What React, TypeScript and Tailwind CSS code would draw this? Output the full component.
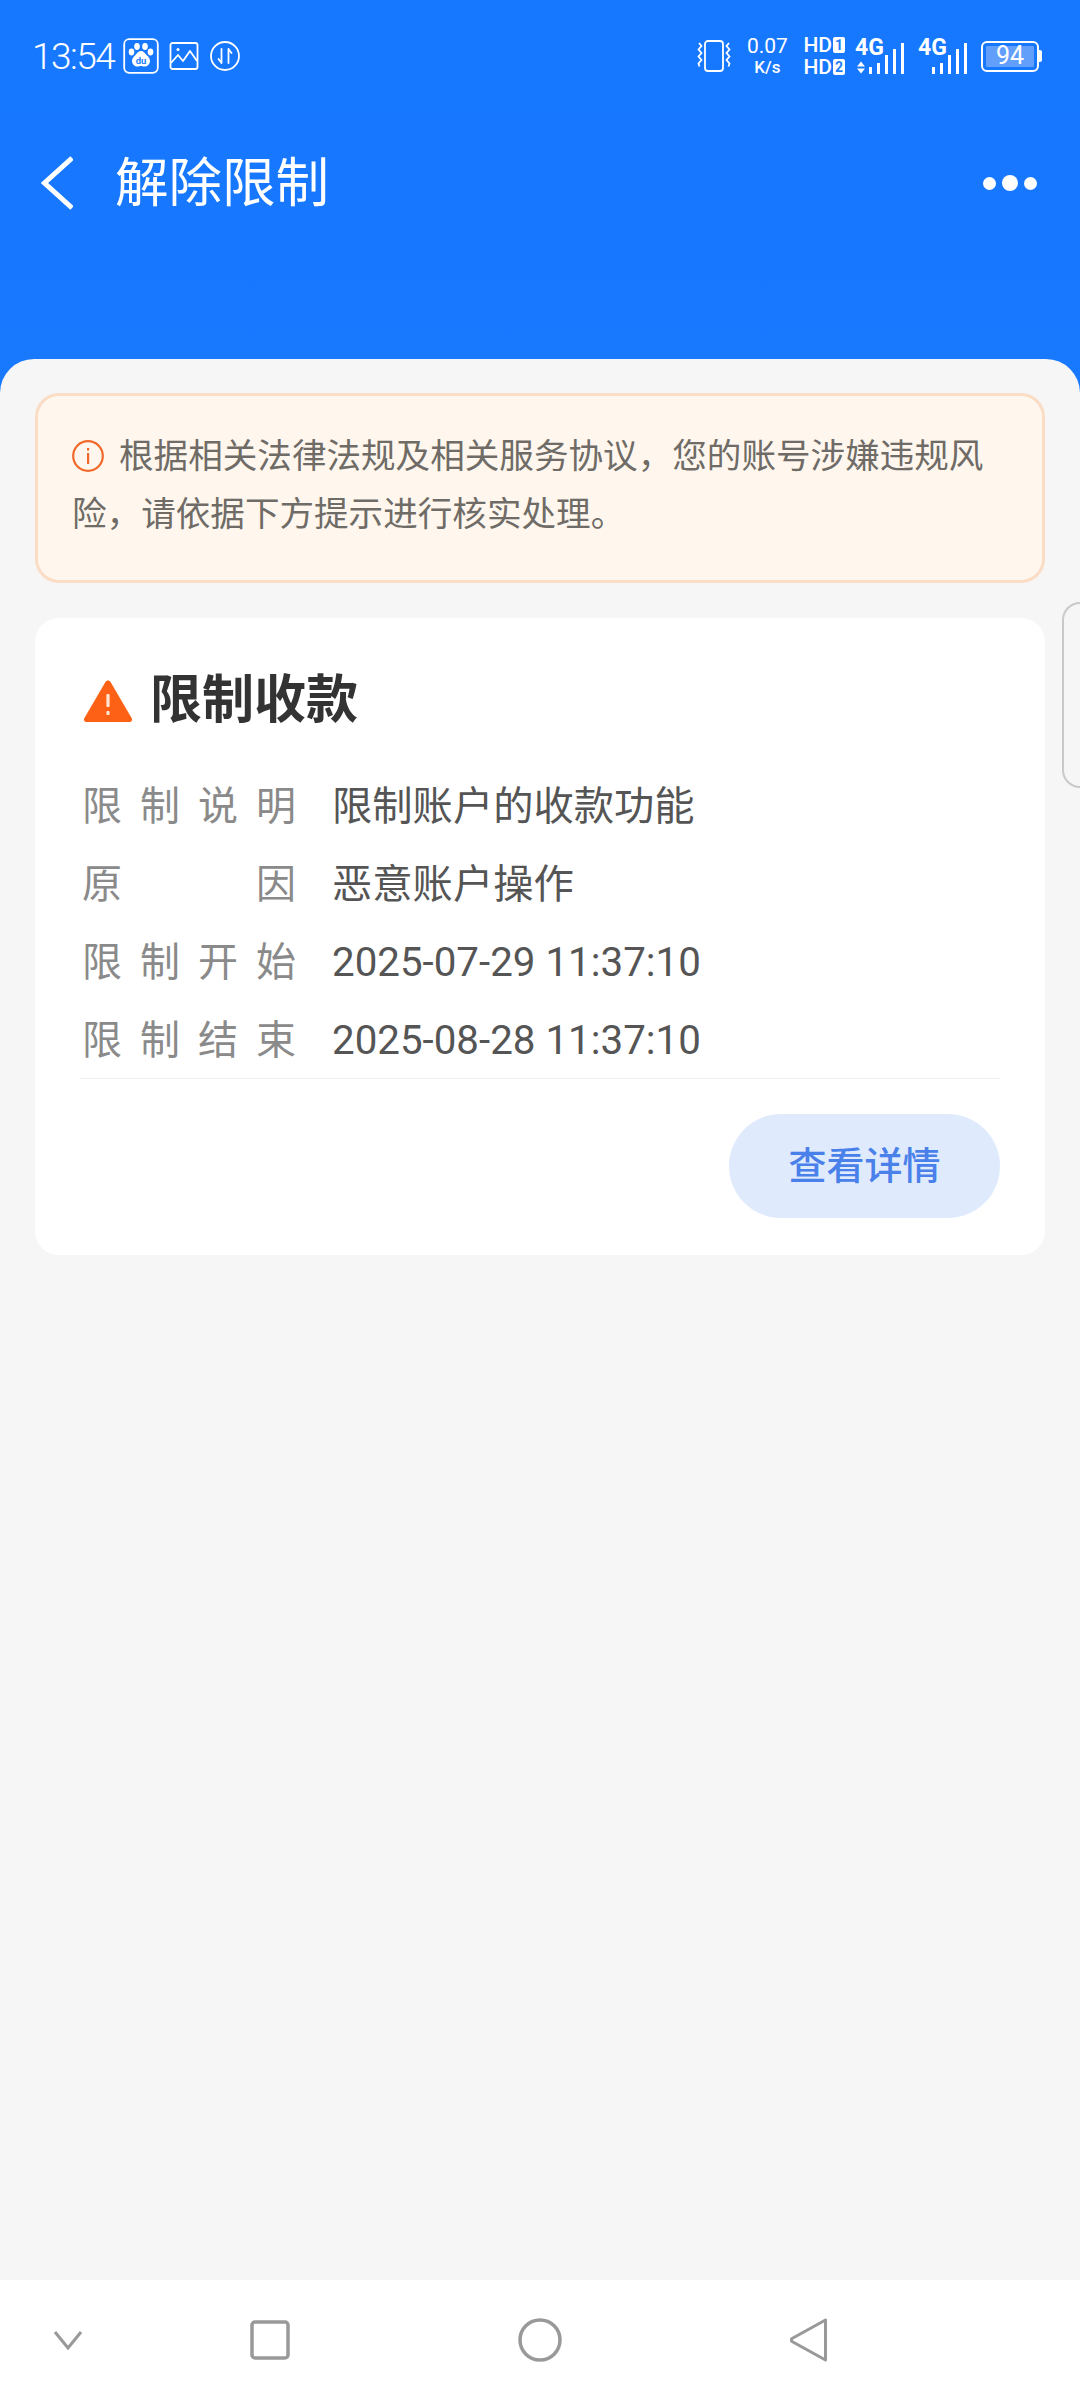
// ============ Status bar icons ============

function BaiduIcon() {
  return (
    <svg width="36" height="36" viewBox="0 0 36 36" fill="none">
      <rect x="1.2" y="1.2" width="33.6" height="33.6" rx="5" stroke="white" strokeWidth="1.8" />
      <ellipse cx="8.5" cy="14" rx="2.8" ry="3.4" fill="white" />
      <ellipse cx="14" cy="8.5" rx="2.8" ry="3.4" fill="white" />
      <ellipse cx="22" cy="8.5" rx="2.8" ry="3.4" fill="white" />
      <ellipse cx="27.5" cy="14" rx="2.8" ry="3.4" fill="white" />
      <path d="M18 13c3 0 4 2.500 6 4.500 2 1.800 3 3.500 3 5.500 0 3.500-3 5.500-5.500 5.500-1.500 0-2.500-.5-3.500-.5s-2 .5-3.500.5C12 28.500 9 26.500 9 23c0-2 1-3.700 3-5.500 2-2 3-4.500 6-4.500z" fill="white" />
      <text x="18" y="26" textAnchor="middle" fontSize="9.500" fontWeight="700" fill="#1f7ffb" fontFamily="Roboto, sans-serif">du</text>
    </svg>
  )
}

function PictureIcon() {
  return (
    <svg width="30" height="30" viewBox="0 0 30 30" fill="none" stroke="white" strokeWidth="1.800">
      <rect x="1.500" y="2" width="27" height="26" rx="2" />
      <path d="M2 22l7-8 5 6 7-10 7 10" strokeLinejoin="round" />
      <circle cx="9" cy="8.500" r="1.500" fill="white" stroke="none" />
    </svg>
  )
}

function DataIcon() {
  return (
    <svg width="32" height="32" viewBox="0 0 32 32" fill="none" stroke="white" strokeWidth="1.800">
      <circle cx="16" cy="16" r="14" />
      <path d="M12.500 9v14M12.500 23l-3-4" strokeLinecap="round" />
      <path d="M19.500 23V9M19.500 9l3 4" strokeLinecap="round" />
    </svg>
  )
}

function VibrateIcon() {
  return (
    <svg width="36" height="34" viewBox="0 0 36 34" fill="none" stroke="white" strokeWidth="1.800">
      <rect x="9" y="2" width="18" height="30" rx="3" />
      <path d="M3 4l2.500 3-3 3.500 3 3.500-3 3.500 3 3.500-3 3.500 1 3" />
      <path d="M33 4l-2.500 3 3 3.500-3 3.500 3 3.500-3 3.500 3 3.500-1 3" />
    </svg>
  )
}

function SignalIcon({ arrows }: { arrows?: boolean }) {
  return (
    <svg width="51" height="36" viewBox="0 0 51 36" fill="white">
      {arrows && <path d="M2 28.500l4-5 4 5zM2 30.500l4 5 4-5z" />}
      <rect x="14" y="29" width="3" height="7" />
      <rect x="22" y="25" width="3" height="11" />
      <rect x="30" y="17" width="3" height="19" />
      <rect x="38" y="11" width="3" height="25" />
      <rect x="46" y="5" width="3" height="31" />
    </svg>
  )
}

function HdLine({ n }: { n: string }) {
  return (
    <div className="flex items-center h-[16px] text-[21px] font-medium leading-none text-white">
      <span>HD</span>
      <span className="flex items-center justify-center w-[12px] h-[16px] ml-[1px] rounded-[2px] bg-white text-[#1f7ffb] text-[14px] font-bold">
        {n}
      </span>
    </div>
  )
}

function Battery() {
  return (
    <div className="flex items-center">
      <div className="flex items-center w-[58px] h-[31px] p-[3px] rounded-[6px] border-2 border-white">
        <div className="flex items-center justify-center w-full h-full bg-[#629ffb] rounded-[1px] text-[25px] text-white">94</div>
      </div>
      <div className="w-[3px] h-[12px] bg-white rounded-r-[2px]" />
    </div>
  )
}

function StatusBar() {
  return (
    <div className="flex items-center justify-between h-[36px] mt-[38px] pl-[32px] pr-[38px] text-white">
      <div className="flex items-center">
        <span className="text-[37px] font-light tracking-[-1.500px] leading-none w-[91px]">13:54</span>
        <BaiduIcon />
        <span className="ml-[10px]"><PictureIcon /></span>
        <span className="ml-[10px]"><DataIcon /></span>
      </div>
      <div className="flex items-center">
        <VibrateIcon />
        <div className="flex flex-col items-center ml-[14px] w-[42px] leading-none">
          <span className="text-[21px]">0.07</span>
          <span className="text-[17px] font-medium mt-[2px]">K/s</span>
        </div>
        <div className="flex flex-col ml-[15px] gap-[6px]">
          <HdLine n="1" />
          <HdLine n="2" />
        </div>
        <div className="relative ml-[10px]">
          <SignalIcon arrows />
          <span className="absolute left-0 top-[-2px] text-[23px] font-bold leading-none">4G</span>
        </div>
        <div className="relative ml-[12px]">
          <SignalIcon />
          <span className="absolute left-0 top-[-2px] text-[23px] font-bold leading-none">4G</span>
        </div>
        <span className="ml-[12px]"><Battery /></span>
      </div>
    </div>
  )
}

// ============ Page pieces ============

function TitleBar() {
  return (
    <div className="flex items-center justify-between h-[80px] mt-[69px] pl-[41px] pr-[43px] text-white">
      <div className="flex items-center">
        <svg width="32" height="54" viewBox="0 0 32 54" fill="none" stroke="white" strokeWidth="5">
          <path d="M31 2L3.500 27 31 52" />
        </svg>
        <span className="ml-[42px] mt-[2px] text-[53.500px] leading-none">解除限制</span>
      </div>
      <div className="flex items-center gap-[6px]">
        <div className="w-[13px] h-[13px] rounded-full bg-white" />
        <div className="w-[16px] h-[16px] rounded-full bg-white" />
        <div className="w-[13px] h-[13px] rounded-full bg-white" />
      </div>
    </div>
  )
}

function Notice() {
  return (
    <div className="h-[190px] pt-[31px] pl-[34px] pr-[46px] rounded-[24px] border-[3px] border-[#fbdcc4] bg-[#fff7ee] text-[34.600px] leading-[58px] text-[#6f6b66]">
      <svg className="inline-block align-[-4px] mr-[15px]" width="32" height="32" viewBox="0 0 32 32" fill="none">
        <circle cx="16" cy="16" r="14.800" stroke="#f0692a" strokeWidth="2.200" />
        <rect x="15" y="8" width="2.200" height="2.500" fill="#f0692a" />
        <rect x="15" y="13" width="2.200" height="11" fill="#f0692a" />
      </svg>
      根据相关法律法规及相关服务协议，您的账号涉嫌违规风险，请依据下方提示进行核实处理。
    </div>
  )
}

function InfoRow({ label, value }: { label: string[]; value: string }) {
  return (
    <div className="flex items-center h-[78px] ml-[2px]">
      <div className="flex justify-between w-[214px] text-[40px] text-[#8a8a8a]">
        {label.map((ch, i) => (
          <span key={i}>{ch}</span>
        ))}
      </div>
      <span className="ml-[36px] text-[40.300px] text-[#555555]">{value}</span>
    </div>
  )
}

function RestrictionCard() {
  return (
    <div className="flex flex-col h-[637px] mt-[35px] pt-[56px] pl-[45px] pr-[45px] rounded-[24px] bg-white">
      <div className="flex items-center h-[54px] ml-[3px]">
        <svg width="50" height="44" viewBox="0 0 50 44">
          <path d="M25 1.500c1 0 2 .6 2.700 1.700l21 36c1 1.900 0 3.800-2.200 3.800H3.500c-2.200 0-3.200-1.900-2.200-3.800l21-36C23 2.100 24 1.500 25 1.500z" fill="#fc6115" />
          <rect x="23.400" y="15" width="3.200" height="13" rx="1" fill="#ffe6d4" />
          <rect x="23.400" y="32" width="3.200" height="4" rx="1" fill="#ffe6d4" />
        </svg>
        <span className="ml-[17px] text-[52px] font-bold leading-none text-[#333333]">限制收款</span>
      </div>
      <div className="mt-[40px] leading-none">
        <InfoRow label={['限', '制', '说', '明']} value="限制账户的收款功能" />
        <InfoRow label={['原', '因']} value="恶意账户操作" />
        <InfoRow label={['限', '制', '开', '始']} value="2025-07-29 11:37:10" />
        <InfoRow label={['限', '制', '结', '束']} value="2025-08-28 11:37:10" />
      </div>
      <div className="h-px mt-[-2px] bg-[#f0f0f0]" />
      <div className="flex justify-end mt-[35px]">
        <div className="flex items-center justify-center w-[271px] h-[104px] rounded-full bg-[#dfebfd] text-[38px] font-medium text-[#4a80ea]">
          查看详情
        </div>
      </div>
    </div>
  )
}

function NavBar() {
  return (
    <div className="flex items-center h-[120px] pl-[54px] bg-white">
      <svg width="28" height="20" viewBox="0 0 28 20" fill="none" stroke="#999999" strokeWidth="3">
        <path d="M1 2l13 16L27 2" />
      </svg>
      <svg className="ml-[168px]" width="40" height="40" viewBox="0 0 40 40" fill="none" stroke="#999999" strokeWidth="3.500">
        <rect x="2" y="2" width="36" height="36" rx="3" />
      </svg>
      <svg className="ml-[228px]" width="44" height="44" viewBox="0 0 44 44" fill="none" stroke="#999999" strokeWidth="3.500">
        <circle cx="22" cy="22" r="20" />
      </svg>
      <svg className="ml-[228px]" width="38" height="44" viewBox="0 0 38 44" fill="none" stroke="#999999" strokeWidth="3" strokeLinejoin="round">
        <path d="M35.500 2v40L2 23.500c-.8-.8-.8-2.200 0-3z" />
      </svg>
    </div>
  )
}

export default function App() {
  return (
    <div className="relative flex flex-col h-[2400px] w-[1080px] overflow-hidden bg-gradient-to-b from-[#1677ff] to-[#2184ff] font-['Roboto','Noto_Sans_CJK_SC',sans-serif]">
      <div className="h-[359px]">
        <StatusBar />
        <TitleBar />
      </div>
      <div className="flex-1 px-[35px] pt-[34px] rounded-t-[34px] bg-[#f6f6f6]">
        <Notice />
        <RestrictionCard />
      </div>
      <NavBar />
      {/* floating side tab */}
      <div className="absolute right-0 top-[602px] w-[18px] h-[186px] rounded-l-[18px] border-2 border-r-0 border-[#c9c9c9]" />
    </div>
  )
}
